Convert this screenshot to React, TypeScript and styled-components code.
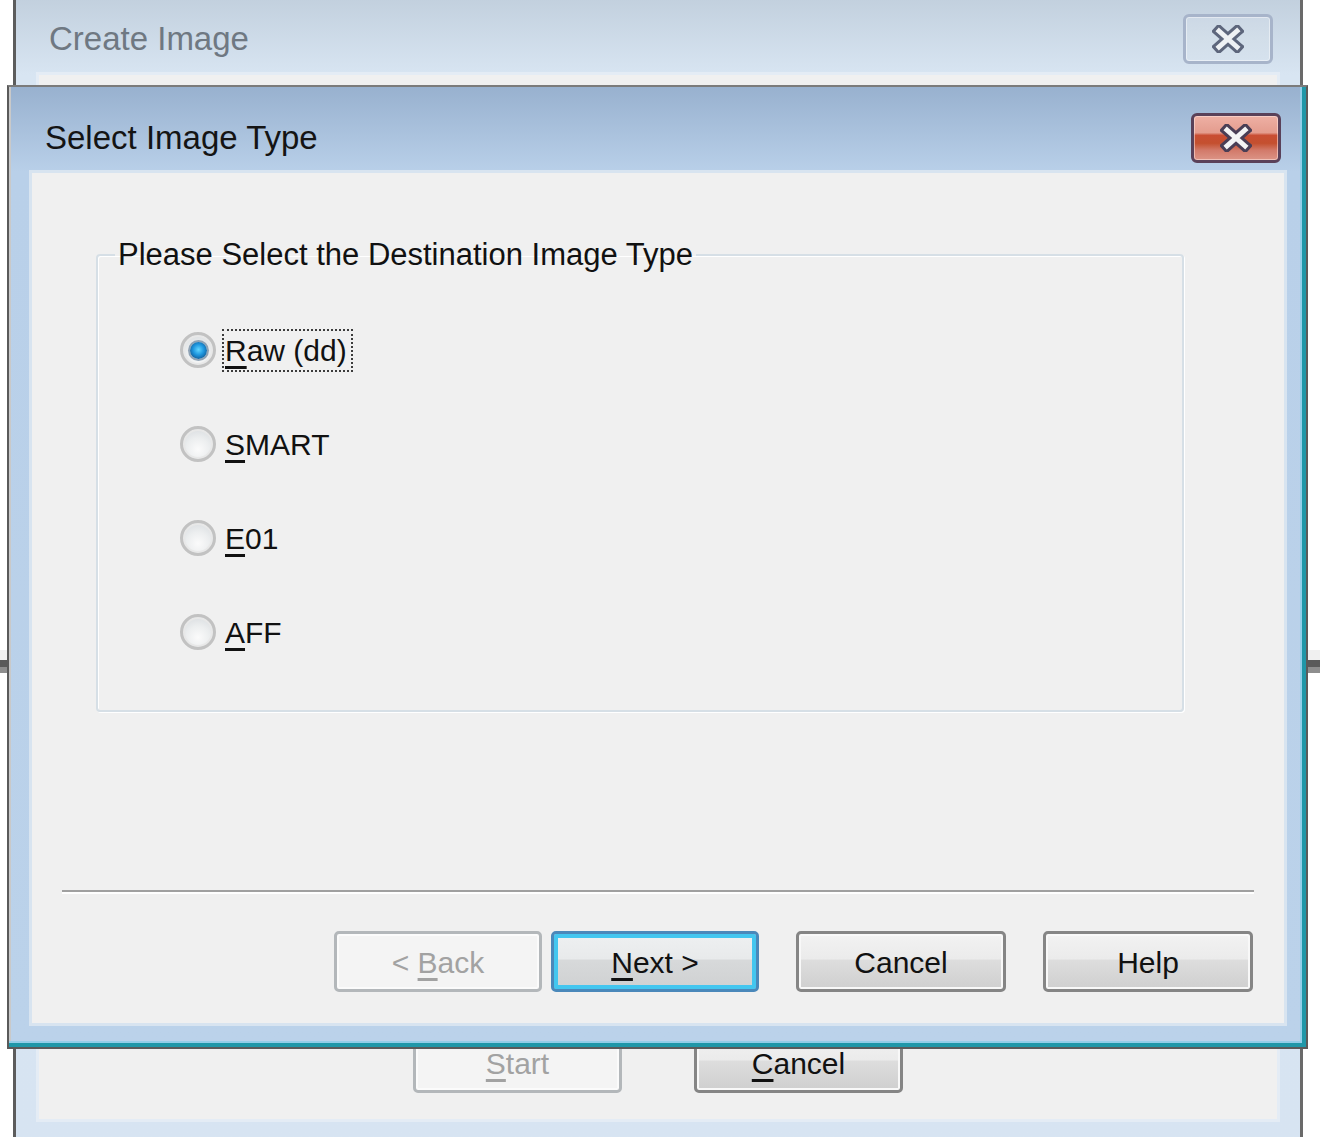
import React from 'react';
import styled, { createGlobalStyle, css } from 'styled-components';

const GlobalStyle = createGlobalStyle`
  html, body { margin: 0; padding: 0; background: #ffffff; }
  body { font-family: "Liberation Sans", Arial, sans-serif; }
`;

const Desktop = styled.div`
  position: relative;
  width: 1320px;
  height: 1137px;
  overflow: hidden;
  background: #ffffff;
`;

const BackdropStrip = styled.div`
  position: absolute;
  left: 0;
  right: 0;
  top: 650px;
  height: 23px;
  background: linear-gradient(#f0f0f0 0 10px, #5a5a5a 10px 17px, #8e8e8e 17px 23px);
`;

/* ---------- background window ---------- */

const BackWindow = styled.div`
  position: absolute;
  left: 13px;
  top: -8px;
  width: 1290px;
  height: 1170px;
  box-sizing: border-box;
  border: 3px solid #5c5c5c;
  border-right-color: #6a6a6a;
  background: linear-gradient(180deg, #c1cfdd 0px, #d8e5f2 80px, #d7e4f2 100%);
  padding: 0 20px;
  display: flex;
  flex-direction: column;
`;

const TitleBar = styled.div<{ $height: number; $padTop: number; $padLeft: number }>`
  flex: none;
  box-sizing: border-box;
  height: ${p => p.$height}px;
  padding: ${p => p.$padTop}px 0 0 ${p => p.$padLeft}px;
  display: flex;
  align-items: center;
`;

const TitleText = styled.span<{ $inactive?: boolean }>`
  font-family: "Liberation Sans", Arial, sans-serif;
  font-size: 33px;
  line-height: 40px;
  color: ${p => (p.$inactive ? '#6f7882' : '#141414')};
  white-space: nowrap;
`;

const CloseButton = styled.div<{ $active?: boolean; $right: number }>`
  flex: none;
  margin-left: auto;
  margin-right: ${p => p.$right}px;
  width: 90px;
  height: 50px;
  box-sizing: border-box;
  border-radius: 6px;
  display: flex;
  align-items: center;
  justify-content: center;
  ${p =>
    p.$active
      ? css`
          border: 3px solid #5a4159;
          background: linear-gradient(
            180deg,
            #eeb0a4 0%,
            #e49c8e 38%,
            #c94d33 44%,
            #c4502f 62%,
            #d27a6a 78%,
            #dc9486 100%
          );
          box-shadow: inset 0 0 0 1px rgba(255, 230, 225, 0.55);
        `
      : css`
          border: 3px solid #a7b4ca;
          background: linear-gradient(180deg, #ccd8e5 0%, #d2dee9 50%, #d6e2ee 100%);
          box-shadow: inset 0 0 0 1px rgba(255, 255, 255, 0.45);
        `}
`;

const BackClient = styled.div`
  flex: none;
  height: 1050px;
  box-sizing: border-box;
  background: #f0f0f0;
  border: 3px solid #e4ecf5;
  display: flex;
  flex-direction: column;
  justify-content: flex-end;
  padding: 0 0 26px 374px;
`;

/* ---------- front dialog ---------- */

const Dialog = styled.div`
  position: absolute;
  left: 7px;
  top: 85px;
  width: 1301px;
  height: 964px;
  box-sizing: border-box;
  border: 2px solid #5a5a5a;
  border-top-color: #7b7b7b;
  background: linear-gradient(180deg, #98b1cf 0px, #b9d0e9 85px, #bbd2ea 100%);
  box-shadow: inset -4px -4px 0 #1f97a8, inset -6px -6px 0 #93cde8, inset 2px 0 0 #c9c9c9;
  padding: 0 19px 21px 20px;
  display: flex;
  flex-direction: column;
`;

const Client = styled.div`
  flex: 1;
  box-sizing: border-box;
  background: #f0f0f0;
  border: 3px solid #d8e4f0;
  display: flex;
  flex-direction: column;
`;

const GroupBox = styled.fieldset`
  margin: 64px 100px 0 64px;
  height: 475px;
  box-sizing: border-box;
  padding: 0;
  min-width: 0;
  border: 2px solid #d6dfe6;
  border-radius: 4px;
  box-shadow: 1px 1px 0 #ffffff, inset 1px 1px 0 #ffffff;
`;

const Legend = styled.legend`
  margin-left: 17px;
  padding: 0 3px;
  font-family: "Liberation Sans", Arial, sans-serif;
  font-size: 31px;
  line-height: 36px;
  color: #111;
  white-space: nowrap;
`;

const RadioList = styled.div`
  margin: 59px 0 0 82px;
  display: flex;
  flex-direction: column;
  gap: 58px;
`;

const RadioRow = styled.div`
  height: 36px;
  display: flex;
  align-items: center;
`;

const RadioCircle = styled.span<{ $checked?: boolean }>`
  position: relative;
  flex: none;
  width: 36px;
  height: 36px;
  box-sizing: border-box;
  border-radius: 50%;
  border: 3px solid #c2c2c2;
  background: radial-gradient(circle at 50% 68%, #fbfbfb 0%, #eceeef 45%, #d3d7db 100%);
  box-shadow: inset 0 0 0 2px #e8e8e8;
  ${p =>
    p.$checked &&
    css`
      &::after {
        content: '';
        position: absolute;
        left: 50%;
        top: 50%;
        width: 17px;
        height: 17px;
        margin: -8.5px 0 0 -8.5px;
        border-radius: 50%;
        background: radial-gradient(circle at 50% 45%, #62d6ff 0%, #1e97df 42%, #0f4c82 88%);
        box-shadow: 0 0 0 2px #8fa3b5;
      }
    `}
`;

const RadioLabel = styled.span<{ $focused?: boolean }>`
  margin-left: 6px;
  padding: 0 4px 0 1px;
  border: 2px dotted ${p => (p.$focused ? '#3c3c3c' : 'transparent')};
  font-family: "Liberation Sans", Arial, sans-serif;
  font-size: 30px;
  line-height: 39px;
  color: #111;
  white-space: nowrap;
`;

const Key = styled.u`
  text-decoration: underline;
  text-decoration-thickness: 3px;
  text-underline-offset: 5px;
`;

const Separator = styled.div`
  margin: 178px 30px 0 30px;
  height: 0;
  border-top: 2px solid #a0a0a0;
  border-bottom: 2px solid #ffffff;
`;

const ButtonRow = styled.div`
  margin-top: 37px;
  padding-right: 31px;
  display: flex;
  justify-content: flex-end;
  gap: 37px;
`;

const NavPair = styled.div`
  display: flex;
  gap: 9px;
`;

const BackButtonRow = styled.div`
  display: flex;
  gap: 72px;
`;

type Variant = 'normal' | 'default' | 'disabled';

const Button = styled.div<{ $variant?: Variant; $width?: number }>`
  width: ${p => p.$width ?? 209}px;
  height: 61px;
  box-sizing: border-box;
  padding-top: 3px;
  border-radius: 5px;
  display: flex;
  align-items: center;
  justify-content: center;
  font-family: "Liberation Sans", Arial, sans-serif;
  font-size: 30px;
  line-height: 1;
  color: #111;
  ${p => {
    switch (p.$variant) {
      case 'disabled':
        return css`
          border: 3px solid #b3b7ba;
          background: #f4f4f4;
          color: #a2a2a2;
          box-shadow: inset 0 0 0 2px #fbfbfb;
        `;
      case 'default':
        return css`
          border: 3px solid #4a88ba;
          background: linear-gradient(180deg, #eef0f1 0%, #e8eaeb 45%, #d7d9da 48%, #cfd1d2 100%);
          box-shadow: inset 0 0 0 4px #43c6ef;
        `;
      default:
        return css`
          border: 3px solid #858585;
          background: linear-gradient(180deg, #f2f2f2 0%, #ebebeb 45%, #dddddd 48%, #cfcfcf 100%);
          box-shadow: inset 0 0 0 2px #f8f8f8;
        `;
    }
  }}
`;

const CloseGlyph: React.FC<{ $active?: boolean }> = ({ $active }) => (
  <svg width="32" height="28" viewBox="0 0 32 28">
    <g strokeLinecap="square">
      <path d="M7 6 L25 22 M25 6 L7 22" stroke={$active ? '#4a3e55' : '#5d667c'} strokeWidth="11" />
      <path d="M7 6 L25 22 M25 6 L7 22" stroke={$active ? '#f4f4f4' : '#eef1f4'} strokeWidth="5" />
    </g>
  </svg>
);

const options: { key: string; rest: string; checked?: boolean }[] = [
  { key: 'R', rest: 'aw (dd)', checked: true },
  { key: 'S', rest: 'MART' },
  { key: 'E', rest: '01' },
  { key: 'A', rest: 'FF' },
];

export default function App() {
  return (
    <>
      <GlobalStyle />
      <Desktop>
        <BackdropStrip />
        <BackWindow>
          <TitleBar $height={77} $padTop={10} $padLeft={13}>
            <TitleText $inactive>Create Image</TitleText>
            <CloseButton $right={7}>
              <CloseGlyph />
            </CloseButton>
          </TitleBar>
          <BackClient>
            <BackButtonRow>
              <Button $variant="disabled">
                <span>
                  <Key>S</Key>tart
                </span>
              </Button>
              <Button>
                <span>
                  <Key>C</Key>ancel
                </span>
              </Button>
            </BackButtonRow>
          </BackClient>
        </BackWindow>

        <Dialog>
          <TitleBar $height={83} $padTop={18} $padLeft={16}>
            <TitleText>Select Image Type</TitleText>
            <CloseButton $active $right={6}>
              <CloseGlyph $active />
            </CloseButton>
          </TitleBar>
          <Client>
            <GroupBox>
              <Legend>Please Select the Destination Image Type</Legend>
              <RadioList>
                {options.map(o => (
                  <RadioRow key={o.key}>
                    <RadioCircle $checked={o.checked} />
                    <RadioLabel $focused={o.checked}>
                      <Key>{o.key}</Key>
                      {o.rest}
                    </RadioLabel>
                  </RadioRow>
                ))}
              </RadioList>
            </GroupBox>
            <Separator />
            <ButtonRow>
              <NavPair>
                <Button $variant="disabled" $width={208}>
                  <span>
                    &lt; <Key>B</Key>ack
                  </span>
                </Button>
                <Button $variant="default" $width={208}>
                  <span>
                    <Key>N</Key>ext &gt;
                  </span>
                </Button>
              </NavPair>
              <Button $width={210}>Cancel</Button>
              <Button $width={210}>Help</Button>
            </ButtonRow>
          </Client>
        </Dialog>
      </Desktop>
    </>
  );
}
